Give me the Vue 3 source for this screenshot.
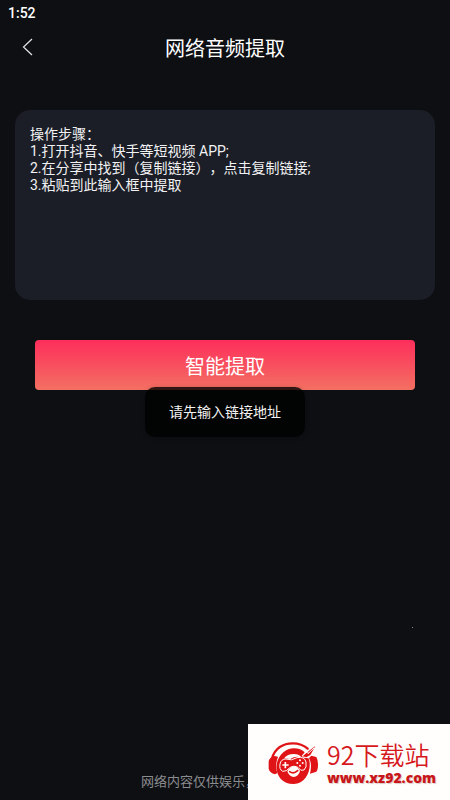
<script setup>
import { ref } from 'vue'

const link = ref('')
const steps = [
  '操作步骤：',
  '1.打开抖音、快手等短视频 APP;',
  '2.在分享中找到（复制链接），点击复制链接;',
  '3.粘贴到此输入框中提取'
].join('\n')
</script>

<template>
  <div class="screen">
    <div class="status">1:52</div>
    <header class="header">
      <button class="back" type="button" aria-label="返回">
        <svg width="12" height="18" viewBox="0 0 12 18" fill="none" stroke="#e4e4e6" stroke-width="1.2">
          <path d="M10 1 1.5 9 10 17" />
        </svg>
      </button>
      <h1 class="title">网络音频提取</h1>
    </header>

    <main class="content">
      <textarea v-model="link" class="link-input" :placeholder="steps" aria-label="链接地址"></textarea>
      <button class="extract" type="button">智能提取</button>
    </main>

    <footer class="note">网络内容仅供娱乐，</footer>

    <div class="toast" role="status">请先输入链接地址</div>
    <i class="speck"></i>

    <aside class="mark">
      <svg class="mark-logo" viewBox="12 12 153 129" aria-hidden="true">
        <path d="M24 62C32 30 58 16 86 16C104 16 120 22 131 32" fill="none" stroke="#e01317" stroke-width="7" stroke-linecap="round" />
        <g fill="#e01317">
          <path d="M32 54Q16 58 14 70V92Q17 105 33 109L40 105Q32 82 42 56Z" />
          <path d="M142 53 157 57Q162 66 162 80Q162 95 157 101L138 107Q145 78 135 60Z" />
          <path d="M90 31C104 31 114 35 122 43L113 54L119 59L134 61C145 91 128 138 89 138C34 138 22 74 58 43Q72 31 90 31Z" />
          <path d="M122 49 154 24 139 51 127 58 116 55Z" />
        </g>
        <path d="M117 51 131 40 132 47 150 30" fill="none" stroke="#fffefc" stroke-width="3" />
        <path d="M60 61Q70 48 89 48Q105 48 112 58Q94 52 79 63Z" fill="#fffefc" />
        <path d="M48 78Q51 63 66 63Q82 70 99 59Q121 54 126 72Q129 89 120 96Q110 101 103 89Q89 80 76 90Q68 101 56 100Q45 94 48 78Z" fill="#e01317" stroke="#fffefc" stroke-width="3" />
        <path d="M55 81H74M64 72V91" stroke="#fffefc" stroke-width="5" />
        <g fill="#fffefc">
          <circle cx="108" cy="67" r="3" />
          <circle cx="100" cy="75" r="3" />
          <circle cx="116" cy="75" r="3" />
          <circle cx="108" cy="83" r="3" />
          <path d="M70 100Q77 87 90 85Q103 87 108 99Q104 116 88 117Q74 114 70 100Z" />
        </g>
        <path d="M77 101Q89 109 101 98" fill="none" stroke="#e01317" stroke-width="5" stroke-linecap="round" />
      </svg>
      <div class="mark-text">
        <span class="mark-name">92下载站</span>
        <span class="mark-url">www.xz92.com</span>
      </div>
    </aside>
  </div>
</template>

<style>
body {
  background: #0e0f13;
}
</style>

<style scoped>
.screen {
  position: relative;
  box-sizing: border-box;
  min-height: 100vh;
  display: flex;
  flex-direction: column;
  overflow: hidden;
  background: #0e0f13;
  color: #fff;
  font-family: Roboto, "Noto Sans CJK SC", sans-serif;
  text-spacing-trim: space-all;
}

.status {
  padding: 4px 8px 0;
  font-size: 14px;
  font-weight: 500;
  line-height: 18px;
}

.header {
  display: grid;
  grid-template-columns: 56px 1fr 56px;
  align-items: center;
  height: 50px;
}

.back {
  display: flex;
  align-items: center;
  justify-content: center;
  height: 48px;
  padding: 0;
  border: 0;
  background: none;
}

.title {
  margin: 0;
  padding-top: 4px;
  font-size: 20px;
  font-weight: 400;
  line-height: 28px;
  text-align: center;
}

.content {
  display: flex;
  flex-direction: column;
  gap: 40px;
  padding: 38px 15px 0;
}

.link-input {
  box-sizing: border-box;
  width: 100%;
  height: 190px;
  padding: 16px 15px;
  border: 0;
  border-radius: 15px;
  background: #1b1e26;
  color: #f2f2f4;
  font-family: inherit;
  font-size: 14px;
  line-height: 17px;
  text-spacing-trim: space-all;
  resize: none;
  outline: none;
}

.link-input::placeholder {
  color: #f2f2f4;
  opacity: 1;
}

.extract {
  height: 50px;
  margin: 0 20px;
  padding: 0;
  border: 0;
  border-radius: 4px;
  background: linear-gradient(#fd2e5b, #f37062);
  color: #fff;
  font-family: inherit;
  font-size: 20px;
}

.note {
  margin-top: auto;
  padding: 0 0 8px 141px;
  color: #8b8c8e;
  font-size: 13px;
  line-height: 20px;
}

.toast {
  position: absolute;
  top: 387px;
  left: 50%;
  transform: translateX(-50%);
  padding: 15px 24px;
  border-radius: 10px;
  background: rgba(0, 0, 0, 0.8);
  box-shadow: 0 1px 4px rgba(0, 0, 0, 0.3);
  color: #f2f2f2;
  font-size: 14px;
  line-height: 20px;
  white-space: nowrap;
}

.speck {
  position: absolute;
  right: 37px;
  bottom: 172px;
  width: 1px;
  height: 1px;
  background: #85868a;
}

.mark {
  position: absolute;
  right: 0;
  bottom: 0;
  box-sizing: border-box;
  display: flex;
  align-items: flex-start;
  gap: 8px;
  width: 202px;
  height: 76px;
  padding: 18px 0 0 20px;
  background: #fffefc;
}

.mark-logo {
  flex: none;
  width: 51px;
  height: 43px;
}

.mark-text {
  display: flex;
  flex-direction: column;
  gap: 5px;
}

.mark-name {
  color: #d6181c;
  font-family: "Noto Sans CJK SC", sans-serif;
  font-size: 25px;
  font-weight: 350;
  line-height: 24px;
  white-space: nowrap;
}

.mark-url {
  color: #c8161a;
  font-family: "Open Sans", sans-serif;
  font-size: 14px;
  font-weight: 800;
  line-height: 14px;
  text-shadow: 1px 1px 1px #d9c8c5;
}
</style>
